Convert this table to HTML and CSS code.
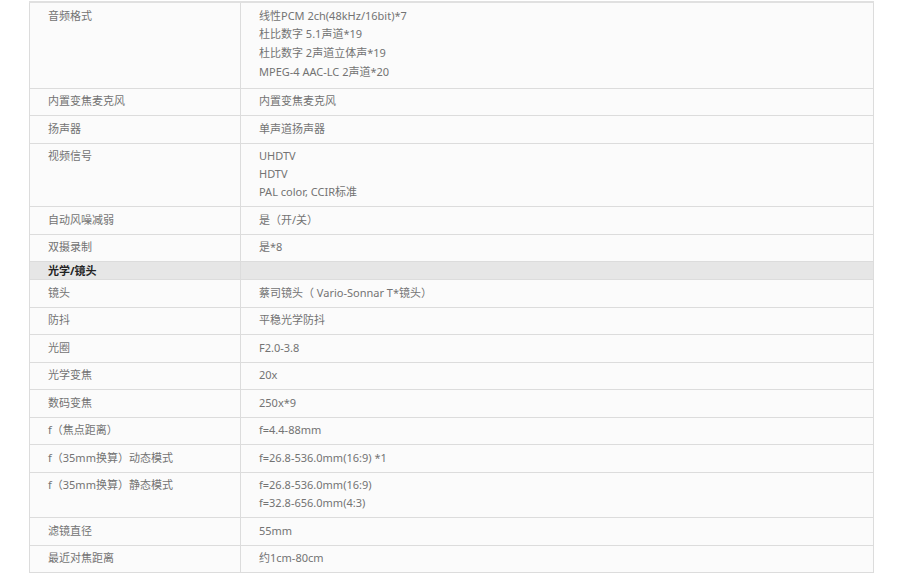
FILE: index.html
```html
<!DOCTYPE html>
<html lang="zh-CN">
<head>
<meta charset="utf-8">
<title>规格</title>
<link rel="stylesheet" href="styles.css">
</head>
<body>
<table class="spec">
  <tbody>
    <tr class="first"><td class="k">音频格式</td><td class="v">线性PCM 2ch(48kHz/16bit)*7<br>杜比数字 5.1声道*19<br>杜比数字 2声道立体声*19<br>MPEG-4 AAC-LC 2声道*20</td></tr>
    <tr><td class="k">内置变焦麦克风</td><td class="v">内置变焦麦克风</td></tr>
    <tr><td class="k">扬声器</td><td class="v">单声道扬声器</td></tr>
    <tr><td class="k">视频信号</td><td class="v">UHDTV<br>HDTV<br>PAL color, CCIR标准</td></tr>
    <tr><td class="k">自动风噪减弱</td><td class="v">是（开/关）</td></tr>
    <tr><td class="k">双摄录制</td><td class="v">是*8</td></tr>
    <tr class="section"><td class="k">光学/镜头</td><td class="v"></td></tr>
    <tr><td class="k">镜头</td><td class="v">蔡司镜头（ Vario-Sonnar T*镜头）</td></tr>
    <tr><td class="k">防抖</td><td class="v">平稳光学防抖</td></tr>
    <tr><td class="k">光圈</td><td class="v">F2.0-3.8</td></tr>
    <tr><td class="k">光学变焦</td><td class="v">20x</td></tr>
    <tr><td class="k">数码变焦</td><td class="v">250x*9</td></tr>
    <tr><td class="k">f（焦点距离）</td><td class="v">f=4.4-88mm</td></tr>
    <tr><td class="k">f（35mm换算）动态模式</td><td class="v">f=26.8-536.0mm(16:9) *1</td></tr>
    <tr><td class="k">f（35mm换算）静态模式</td><td class="v">f=26.8-536.0mm(16:9)<br>f=32.8-656.0mm(4:3)</td></tr>
    <tr><td class="k">滤镜直径</td><td class="v">55mm</td></tr>
    <tr><td class="k">最近对焦距离</td><td class="v">约1cm-80cm</td></tr>
  </tbody>
</table>
</body>
</html>
```

FILE: styles.css
```css
html, body {
  margin: 0;
  padding: 0;
  background: #ffffff;
}

body {
  padding: 1px 0 0 29px;
  font-family: "Noto Sans", "Noto Sans CJK SC", sans-serif;
  font-size: 11px;
  color: #737373;
}

.spec {
  border-collapse: collapse;
  width: 845px;
  table-layout: fixed;
  background: #fbfbfb;
}

.spec td {
  border: 1px solid #dcdcdc;
  padding: 3.5px 18px 5px;
  line-height: 18px;
  vertical-align: top;
  text-align: left;
}

.spec .k {
  width: 174px;
}

.spec tr:first-child td {
  border-top: 2px solid #e0e0e0;
  padding-top: 3.5px;
  padding-bottom: 6.5px;
  line-height: 18.7px;
}

.spec .section td {
  background: #e6e6e6;
  color: #222222;
  font-weight: bold;
  padding-top: 0;
  padding-bottom: 0;
  line-height: 17px;
  height: 17px;
}
```
